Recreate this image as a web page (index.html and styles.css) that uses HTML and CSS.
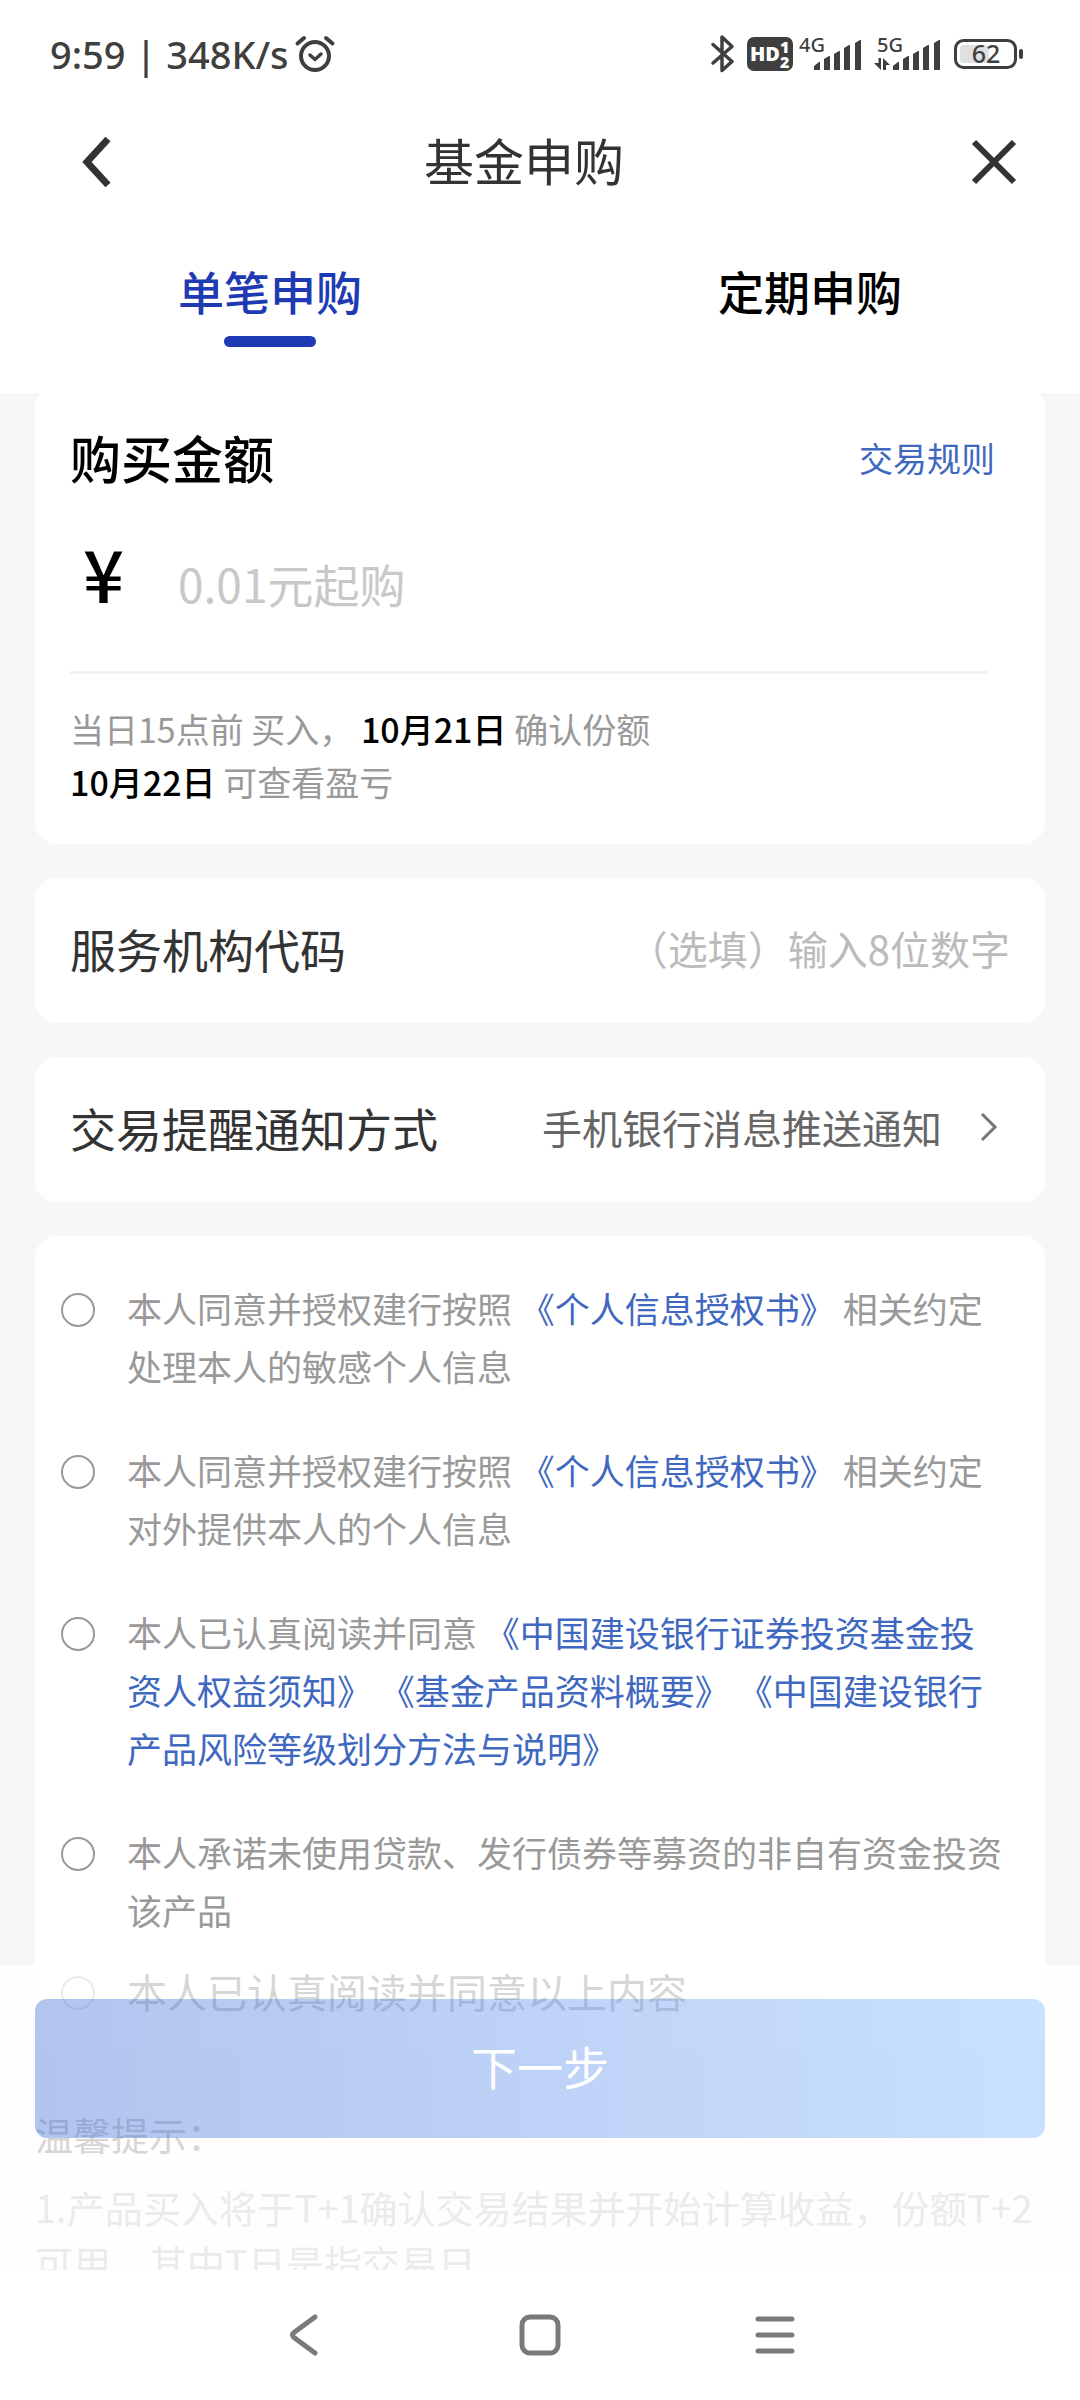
FILE: index.html
```html
<!DOCTYPE html>
<html lang="zh-CN">
<head>
<meta charset="utf-8">
<meta name="viewport" content="width=device-width, initial-scale=1">
<title>基金申购</title>
<link rel="stylesheet" href="styles.css">
</head>
<body>
<div class="app">
  <header class="header">
    <div class="status">
      <div class="status-left">
        <span>9:59 | 348K/s</span>
        <svg width="40" height="38" viewBox="0 0 40 38" fill="none" stroke="currentColor" stroke-width="4" stroke-linecap="round" aria-hidden="true">
          <circle cx="20" cy="21" r="14"/>
          <path d="M15 20l5 4.500 6-5.500" stroke-width="3.500"/>
          <path d="M2.500 8.500L9 3M31 3l6.500 5.500"/>
        </svg>
      </div>
      <div class="status-right">
        <svg width="30" height="38" viewBox="0 0 30 38" fill="none" stroke="currentColor" stroke-width="3.500" stroke-linejoin="round" stroke-linecap="round" aria-hidden="true">
          <path d="M2 9.500l19 17-10 9V2l10 9.500-19 16.500"/>
        </svg>
        <svg width="46" height="34" viewBox="0 0 46 34" aria-hidden="true">
          <rect width="46" height="34" rx="7" fill="currentColor"/>
          <text x="3" y="24" class="hd">HD</text>
          <text x="33" y="16" class="hd-small">1</text>
          <text x="33" y="31" class="hd-small">2</text>
        </svg>
        <svg width="69" height="34" viewBox="0 0 69 34" fill="currentColor" aria-hidden="true">
          <text x="0" y="15" class="net">4G</text>
          <path d="M15 33v-4l5-4h1v8zM25 33V22l5-3h1v14zM35 33V17l5-3h1v19zM45 33V11l5-3h1v25zM56 33V6l5-3h1v30z"/>
        </svg>
        <svg width="74" height="34" viewBox="0 0 74 34" fill="currentColor" aria-hidden="true">
          <text x="3" y="15" class="net">5G</text>
          <path d="M4.500 21h2.500v12L0 26h4.500zM9 33V21l7 7h-4v5z"/>
          <path d="M19 33v-4l5-4h1v8zM29 33V22l5-3h1v14zM39 33V17l5-3h1v19zM49 33V11l5-3h1v25zM60 33V6l5-3h1v30z"/>
        </svg>
        <svg width="69" height="32" viewBox="0 0 69 32" aria-hidden="true">
          <rect x="1.500" y="2.500" width="60" height="27" rx="8" fill="none" stroke="currentColor" stroke-width="3"/>
          <rect x="6" y="7" width="29" height="18" rx="4" fill="#e0e0e0"/>
          <rect x="65" y="11" width="4" height="10" rx="2" fill="currentColor"/>
          <text x="32" y="25" class="battery" fill="currentColor">62</text>
        </svg>
      </div>
    </div>
    <div class="titlebar">
      <button class="icon-button" type="button" aria-label="返回">
        <svg width="30" height="52" viewBox="0 0 30 52" fill="none" stroke="currentColor" stroke-width="7" aria-hidden="true"><path d="M26 3L5 26l21 23"/></svg>
      </button>
      <h1 class="title">基金申购</h1>
      <button class="icon-button icon-button-end" type="button" aria-label="关闭">
        <svg width="44" height="44" viewBox="0 0 44 44" fill="none" stroke="currentColor" stroke-width="6" aria-hidden="true"><path d="M2 2l40 40M42 2L2 42"/></svg>
      </button>
    </div>
    <nav class="tabs">
      <button class="tab tab-active" type="button">单笔申购</button>
      <button class="tab" type="button">定期申购</button>
    </nav>
  </header>

  <main class="content">
    <section class="card amount-card">
      <div class="amount-head">
        <h2 class="amount-title"><label for="amount">购买金额</label></h2>
        <a class="link rules" href="#rules">交易规则</a>
      </div>
      <div class="amount-row">
        <span class="yen">¥</span>
        <input class="amount-input" id="amount" type="text" inputmode="decimal" placeholder="0.01元起购">
      </div>
      <p class="confirm">当日15点前 买入， <strong>10月21日</strong> 确认份额<br><strong>10月22日</strong> 可查看盈亏</p>
    </section>

    <section class="card row">
      <label class="row-label" for="org">服务机构代码</label>
      <input class="row-input" id="org" type="text" inputmode="numeric" placeholder="（选填）输入8位数字">
    </section>

    <section class="card">
      <button class="row row-button" type="button">
        <span class="row-label">交易提醒通知方式</span>
        <span class="row-value">手机银行消息推送通知</span>
        <svg width="18" height="30" viewBox="0 0 18 30" fill="none" stroke="#777" stroke-width="3" aria-hidden="true"><path d="M2 2l13 13L2 28"/></svg>
      </button>
    </section>

    <section class="card consents">
      <div class="consent">
        <input class="check" type="checkbox" id="c1">
        <label for="c1">本人同意并授权建行按照 <a class="link" href="#auth">《个人信息授权书》</a> 相关约定处理本人的敏感个人信息</label>
      </div>
      <div class="consent">
        <input class="check" type="checkbox" id="c2">
        <label for="c2">本人同意并授权建行按照 <a class="link" href="#auth">《个人信息授权书》</a> 相关约定对外提供本人的个人信息</label>
      </div>
      <div class="consent">
        <input class="check" type="checkbox" id="c3">
        <label for="c3">本人已认真阅读并同意 <a class="link" href="#rights">《中国建设银行证券投资基金投资人权益须知》</a> <a class="link" href="#summary">《基金产品资料概要》</a> <a class="link" href="#risk">《中国建设银行产品风险等级划分方法与说明》</a></label>
      </div>
      <div class="consent">
        <input class="check" type="checkbox" id="c4">
        <label for="c4">本人承诺未使用贷款、发行债券等募资的非自有资金投资该产品</label>
      </div>
      <div class="consent consent-all">
        <input class="check" type="checkbox" id="c5">
        <label for="c5">本人已认真阅读并同意以上内容</label>
      </div>
    </section>

    <section class="tips">
      <h2 class="tips-title">温馨提示：</h2>
      <p class="tips-text">1.产品买入将于T+1确认交易结果并开始计算收益，份额T+2可用，其中T日是指交易日</p>
    </section>

    <div class="action-bar">
      <button class="next" type="button">下一步</button>
    </div>
  </main>

  <footer class="system-nav">
    <button class="system-button" type="button" aria-label="返回">
      <svg width="42" height="42" viewBox="0 0 42 42" aria-hidden="true"><path d="M31 3L10 18.500q-3 2.500 0 5L31 39"/></svg>
    </button>
    <button class="system-button" type="button" aria-label="主页">
      <svg width="42" height="42" viewBox="0 0 42 42" aria-hidden="true"><rect x="3" y="3" width="36" height="36" rx="8"/></svg>
    </button>
    <button class="system-button" type="button" aria-label="最近任务">
      <svg width="42" height="42" viewBox="0 0 42 42" aria-hidden="true"><path d="M4 5h34M4 21h34M4 37h34"/></svg>
    </button>
  </footer>
</div>
</body>
</html>
```
FILE: styles.css
```css
* {
  box-sizing: border-box;
}

body {
  margin: 0;
  background: #fff;
  color: #333;
  font-family: "Noto Sans CJK SC", sans-serif;
}

h1,
h2,
p {
  margin: 0;
  font-weight: 400;
}

button,
input {
  margin: 0;
  padding: 0;
  border: 0;
  background: none;
  color: inherit;
  font: inherit;
}

svg {
  display: block;
  flex: none;
  overflow: visible;
}

.app {
  display: flex;
  flex-direction: column;
  height: 100vh;
}

/* Header */

.header {
  flex: none;
  background: #fff;
}

.status {
  display: flex;
  align-items: center;
  justify-content: space-between;
  height: 108px;
  padding: 0 57px 0 50px;
  color: #3f3f3f;
  font-family: "Noto Sans", sans-serif;
  font-size: 38px;
  font-weight: 500;
}

.status-left,
.status-right {
  display: flex;
  align-items: center;
  gap: 6px;
}

.net {
  font-size: 20px;
}

.hd {
  fill: #fff;
  font: 800 20px "Open Sans", sans-serif;
}

.hd-small {
  fill: #fff;
  font: 800 16px "Open Sans", sans-serif;
}

.battery {
  font-size: 25px;
  text-anchor: middle;
}

.titlebar {
  display: grid;
  grid-template-columns: 1fr auto 1fr;
  align-items: center;
  height: 108px;
  padding: 0 64px 0 32px;
}

.icon-button {
  justify-self: start;
  padding-left: 50px;
}

.icon-button-end {
  justify-self: end;
  padding-left: 0;
}

.title {
  padding-bottom: 6px;
  font-size: 50px;
  line-height: 72px;
}

.tabs {
  display: grid;
  grid-template-columns: 1fr 1fr;
}

.tab {
  display: flex;
  flex-direction: column;
  align-items: center;
  padding: 40px 0 46px;
  color: #000;
  font-size: 46px;
  font-weight: 500;
  line-height: 68px;
}

.tab::after {
  content: "";
  width: 92px;
  height: 11px;
  margin-top: 12px;
  border-radius: 6px;
}

.tab-active {
  color: #1f3bb3;
}

.tab-active::after {
  background: #1f3bb3;
}

.content {
  position: relative;
  flex: 1;
  min-height: 0;
  overflow: hidden;
  padding: 0 35px;
  background: #f7f7f7;
}

.card {
  margin-bottom: 34px;
  border-radius: 22px;
  background: #fff;
}

.link {
  color: #3f68c0;
  text-decoration: none;
}

.amount-card {
  margin-top: -8px;
  padding: 42px 50px 36px 35px;
}

.amount-head {
  display: flex;
  align-items: center;
  justify-content: space-between;
}

.amount-title {
  color: #000;
  font-size: 51px;
  font-weight: 500;
  line-height: 60px;
}

.rules {
  font-size: 34px;
}

.amount-row {
  display: flex;
  align-items: baseline;
  gap: 54px;
  margin: 49px 7px 28px 0;
  padding: 0 0 58px 13px;
  border-bottom: 3px solid #f2f2f2;
}

.yen {
  color: #000;
  font-size: 72px;
  font-weight: 500;
  line-height: 72px;
}

.amount-input {
  flex: 1;
  min-width: 0;
  font-size: 46px;
  line-height: 60px;
}

.amount-input::placeholder {
  color: #c8c8c8;
  opacity: 1;
}

.confirm {
  color: #999;
  font-size: 34px;
  line-height: 53px;
}

.confirm strong {
  color: #000;
  font-weight: 500;
}

.row {
  display: flex;
  align-items: center;
  min-height: 145px;
  padding: 0 35px 6px;
}

.row-button {
  width: 100%;
  padding-right: 47px;
  text-align: left;
}

.row-label {
  flex: 1;
  white-space: nowrap;
  font-size: 46px;
  line-height: 68px;
}

.row-input {
  width: 480px;
  text-align: right;
  font-size: 40px;
  line-height: 60px;
}

.row-input::placeholder {
  color: #bbb;
  opacity: 1;
}

.row-value {
  margin-right: 38px;
  color: #666;
  font-size: 40px;
}

/* Agreements */

.consents {
  display: flex;
  flex-direction: column;
  gap: 46px;
  padding: 43px 40px 30px 26px;
}

.consent {
  display: flex;
  align-items: flex-start;
  gap: 32px;
  color: #999;
  font-size: 35px;
  line-height: 58px;
}

.consent-all {
  margin-top: -23px;
  color: #333;
  font-size: 40px;
}

.check {
  flex: none;
  width: 34px;
  height: 34px;
  margin-top: 14px;
  border: 2px solid #999;
  border-radius: 50%;
  appearance: none;
}

.check:checked {
  background: #1f3bb3;
}

.tips {
  margin-top: 56px;
  color: #999;
  font-size: 38px;
  line-height: 55px;
}

.tips-title {
  margin-bottom: 18px;
  color: #333;
  font-size: 38px;
}

/* Translucent bar over the end of the content */

.action-bar {
  position: absolute;
  right: 0;
  bottom: 0;
  left: 0;
  padding: 34px 35px 132px;
  background: rgba(255, 255, 255, 0.8);
}

.next {
  display: block;
  width: 100%;
  height: 139px;
  padding-bottom: 8px;
  border-radius: 12px;
  background: linear-gradient(90deg, rgba(34, 88, 208, 0.35), rgba(103, 168, 255, 0.35));
  color: #fff;
  font-size: 46px;
}

/* System navigation */

.system-nav {
  display: flex;
  flex: none;
  align-items: center;
  justify-content: center;
  gap: 193px;
  height: 130px;
  background: #fff;
}

.system-button svg {
  fill: none;
  stroke: #7a7a7a;
  stroke-width: 5;
  stroke-linecap: round;
}
```
